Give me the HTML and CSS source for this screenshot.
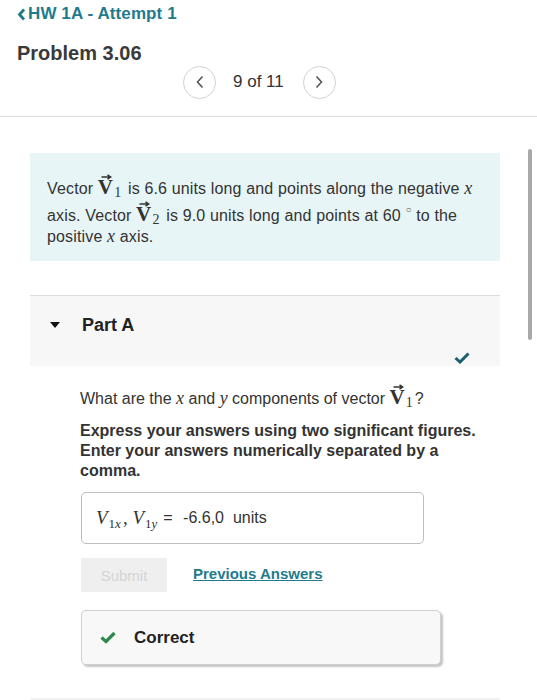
FILE: index.html
```html
<!DOCTYPE html>
<html>
<head>
<meta charset="utf-8">
<link rel="stylesheet" href="styles.css">
</head>
<body>
<div class="page">
  <header class="top">
    <a class="back"><svg class="back-ico" width="9" height="13" viewBox="0 0 9 13"><path d="M7 1.5 L2.5 6.5 L7 11.5" fill="none" stroke="#1f7b8c" stroke-width="2.8"/></svg>HW 1A - Attempt 1</a>
    <h1 class="problem">Problem 3.06</h1>
    <div class="nav">
      <span class="circ"><svg width="10" height="14" viewBox="0 0 10 14"><path d="M7.5 1.5 L2.5 7 L7.5 12.5" fill="none" stroke="#555" stroke-width="1.6"/></svg></span>
      <span class="count">9 of 11</span>
      <span class="circ"><svg width="10" height="14" viewBox="0 0 10 14"><path d="M2.5 1.5 L7.5 7 L2.5 12.5" fill="none" stroke="#555" stroke-width="1.6"/></svg></span>
    </div>
  </header>
  <div class="rule"></div>

  <section class="intro">
    <p>Vector <span class="vec"><svg class="arr" width="11" height="6" viewBox="0 0 11 6"><path d="M0.5 3 H9.5 M6.5 0.8 L9.8 3 L6.5 5.2" fill="none" stroke="#333" stroke-width="1.5"/></svg><b>V</b></span><sub>1</sub> is 6.6 units long and points along the negative <i class="m">x</i><br>axis. Vector <span class="vec"><svg class="arr" width="11" height="6" viewBox="0 0 11 6"><path d="M0.5 3 H9.5 M6.5 0.8 L9.8 3 L6.5 5.2" fill="none" stroke="#333" stroke-width="1.5"/></svg><b>V</b></span><sub>2</sub> is 9.0 units long and points at 60 <sup class="deg">&#9675;</sup> to the<br>positive <i class="m">x</i> axis.</p>
  </section>

  <section class="part">
    <div class="part-head">
      <span class="tri"></span>
      <span class="part-title">Part A</span>
      <svg class="part-check" width="16" height="12" viewBox="0 0 16 12"><path d="M1.5 6 L6 10 L14.5 1.5" fill="none" stroke="#1b5e6d" stroke-width="3"/></svg>
    </div>
    <div class="part-body">
      <p class="q">What are the <i class="m">x</i> and <i class="m">y</i> components of vector <span class="vec"><svg class="arr" width="11" height="6" viewBox="0 0 11 6"><path d="M0.5 3 H9.5 M6.5 0.8 L9.8 3 L6.5 5.2" fill="none" stroke="#333" stroke-width="1.5"/></svg><b>V</b></span><sub>1</sub>?</p>
      <p class="instr">Express your answers using two significant figures. Enter your answers numerically separated by a comma.</p>
      <div class="answer"><span class="mv"><i>V</i><sub>1<i>x</i></sub>, <i>V</i><sub>1<i>y</i></sub></span> <span class="eq">=</span> -6.6,0&nbsp; units</div>
      <div class="actions">
        <span class="submit">Submit</span>
        <a class="prev">Previous Answers</a>
      </div>
      <div class="correct">
        <svg width="16" height="13" viewBox="0 0 16 13"><path d="M1.5 6.5 L6 10.5 L14.5 2" fill="none" stroke="#2b8a4a" stroke-width="3.2"/></svg>
        <span>Correct</span>
      </div>
    </div>
  </section>
  <div class="bottom-rule"></div>
  <div class="scrollbar"></div>
</div>
</body>
</html>
```

FILE: styles.css
```css
* { box-sizing: border-box; }
html, body { margin: 0; padding: 0; background: #fff; }
body {
  font-family: "Liberation Sans", Arial, sans-serif;
  color: #333;
  width: 537px;
  height: 700px;
  overflow: hidden;
}
.page { position: relative; }
.top { padding: 3px 0 0 17px; }
.back {
  display: flex;
  align-items: center;
  gap: 2px;
  color: #1f7b8c;
  font-weight: bold;
  font-size: 17px;
  line-height: 22px;
  letter-spacing: 0.1px;
}
.back-ico { margin-top: 1px; }
.problem {
  margin: 17px 0 0 0;
  font-size: 20px;
  line-height: 22px;
  color: #3a3a3a;
  font-weight: bold;
}
.nav {
  display: flex;
  align-items: center;
  margin: 1px 0 0 166px;
  height: 34px;
}
.circ {
  width: 33px;
  height: 33px;
  border: 1.5px solid #d2d2d2;
  border-radius: 50%;
  display: flex;
  align-items: center;
  justify-content: center;
}
.count {
  font-size: 17px;
  color: #333;
  margin: 0 19px 0 17px;
}
.rule {
  margin-top: 17px;
  height: 1px;
  background: #dcdcdc;
}
.intro {
  margin: 36px 37px 0 30px;
  background: #e8f5f6;
  padding: 19px 17px 14px 17px;
}
.intro p {
  margin: 0;
  font-size: 16px;
  line-height: 21px;
  color: #333;
  letter-spacing: 0.15px;
}
.vec {
  display: inline-block;
  position: relative;
  padding-top: 6px;
  line-height: 19px;
}
.vec b {
  font-family: "Liberation Serif", "DejaVu Serif", serif;
  font-size: 21px;
  font-weight: bold;
  color: #333;
}
.arr {
  position: absolute;
  left: 3px;
  top: 2px;
}
sub {
  font-family: "Liberation Serif", "DejaVu Serif", serif;
  font-size: 14px;
  vertical-align: -3px;
  line-height: 0;
  margin-left: 1px;
  margin-right: 2px;
}
.deg { font-size: 10px; vertical-align: 8px; line-height: 0; color: #555; }
.m {
  font-family: "Liberation Serif", "DejaVu Serif", serif;
  font-style: italic;
  font-size: 18px;
}
.part {
  margin: 34px 37px 0 30px;
}
.part-head {
  position: relative;
  border-top: 1px solid #dcdcdc;
  background: #f7f7f7;
  height: 71px;
  display: flex;
  align-items: flex-start;
  padding: 18px 0 0 20px;
}
.tri {
  width: 0; height: 0;
  border-left: 5.5px solid transparent;
  border-right: 5.5px solid transparent;
  border-top: 6px solid #111;
  margin-top: 8px;
}
.part-title {
  font-size: 18px;
  font-weight: bold;
  color: #222;
  margin-left: 22px;
  line-height: 22px;
}
.part-check { position: absolute; right: 30px; bottom: 2px; }
.part-body { padding: 16px 0 0 50px; }
.q { margin: 0; font-size: 16px; line-height: 24px; color: #333; }
.instr {
  margin: 10px 12px 0 0;
  font-size: 16px;
  font-weight: bold;
  line-height: 20px;
  color: #333;
}
.answer {
  margin: 11px 0 0 1px;
  width: 343px;
  height: 52px;
  border: 1px solid #bdbdbd;
  border-radius: 5px;
  display: flex;
  align-items: center;
  padding-left: 14px;
  font-size: 16px;
  color: #333;
  white-space: pre;
}
.mv {
  font-family: "Liberation Serif", "DejaVu Serif", serif;
  font-size: 19px;
}
.mv sub { font-size: 13px; vertical-align: -4px; }
.eq { margin: 0 6px 0 4px; }
.actions {
  display: flex;
  align-items: center;
  margin: 14px 0 0 1px;
}
.submit {
  width: 86px;
  height: 34px;
  background: #efefef;
  color: #d4d4d4;
  font-size: 15px;
  display: flex;
  align-items: center;
  justify-content: center;
}
.prev {
  margin-left: 26px;
  margin-top: -3px;
  color: #1f7b8c;
  font-weight: bold;
  font-size: 15px;
  text-decoration: underline;
}
.correct {
  margin: 18px 0 0 1px;
  width: 360px;
  height: 55px;
  background: #f8f8f8;
  border: 1px solid #cfcfcf;
  border-radius: 5px;
  box-shadow: 2px 2px 2px #c4c4c4;
  display: flex;
  align-items: center;
  padding-left: 18px;
  gap: 18px;
  font-size: 17px;
  font-weight: bold;
  color: #222;
}
.bottom-rule {
  margin: 33px 37px 0 30px;
  height: 2px;
  background: #f2f2f2;
}
.scrollbar {
  position: absolute;
  left: 528px;
  top: 149px;
  width: 4px;
  height: 191px;
  border-radius: 2px;
  background: #a9a9a9;
}
```
